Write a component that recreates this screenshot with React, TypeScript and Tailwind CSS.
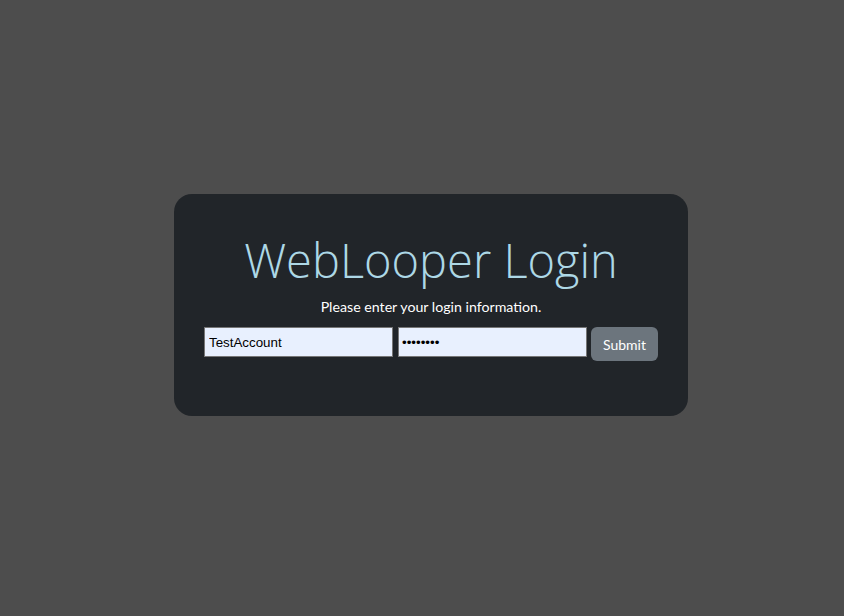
export default function App() {
  return (
    <div className="min-h-screen w-full bg-[#4d4d4d] flex items-center justify-center pl-[18px] pb-[6px]">
      <div className="w-[514px] h-[222px] bg-[#212529] rounded-[18px] flex flex-col items-center pt-[36px]">
        <h1 className="text-[#add8e6] text-[47px] leading-[60px] font-[350] font-['Open_Sans',sans-serif]">
          WebLooper Login
        </h1>
        <p className="mt-[7px] text-white text-[14.2px] leading-[20px] font-['Lato',sans-serif]">
          Please enter your login information.
        </p>
        <form className="mt-[10px] flex items-start gap-[5px]" onSubmit={(e) => e.preventDefault()}>
          <input
            type="text"
            defaultValue="TestAccount"
            className="w-[189px] h-[30px] bg-[#e8f0fe] border border-[#767676] px-[4px] text-[13.33px] text-black font-['Liberation_Sans',Arial,sans-serif] outline-none"
          />
          <input
            type="password"
            defaultValue="password"
            className="w-[189px] h-[30px] bg-[#e8f0fe] border border-[#767676] px-[3px] text-[13.33px] text-black font-['Liberation_Sans',Arial,sans-serif] outline-none"
          />
          <button
            type="submit"
            className="ml-[-1px] w-[67px] h-[34px] bg-[#6c757d] rounded-[6px] text-white text-[14px] font-['Lato',sans-serif]"
          >
            Submit
          </button>
        </form>
      </div>
    </div>
  );
}
